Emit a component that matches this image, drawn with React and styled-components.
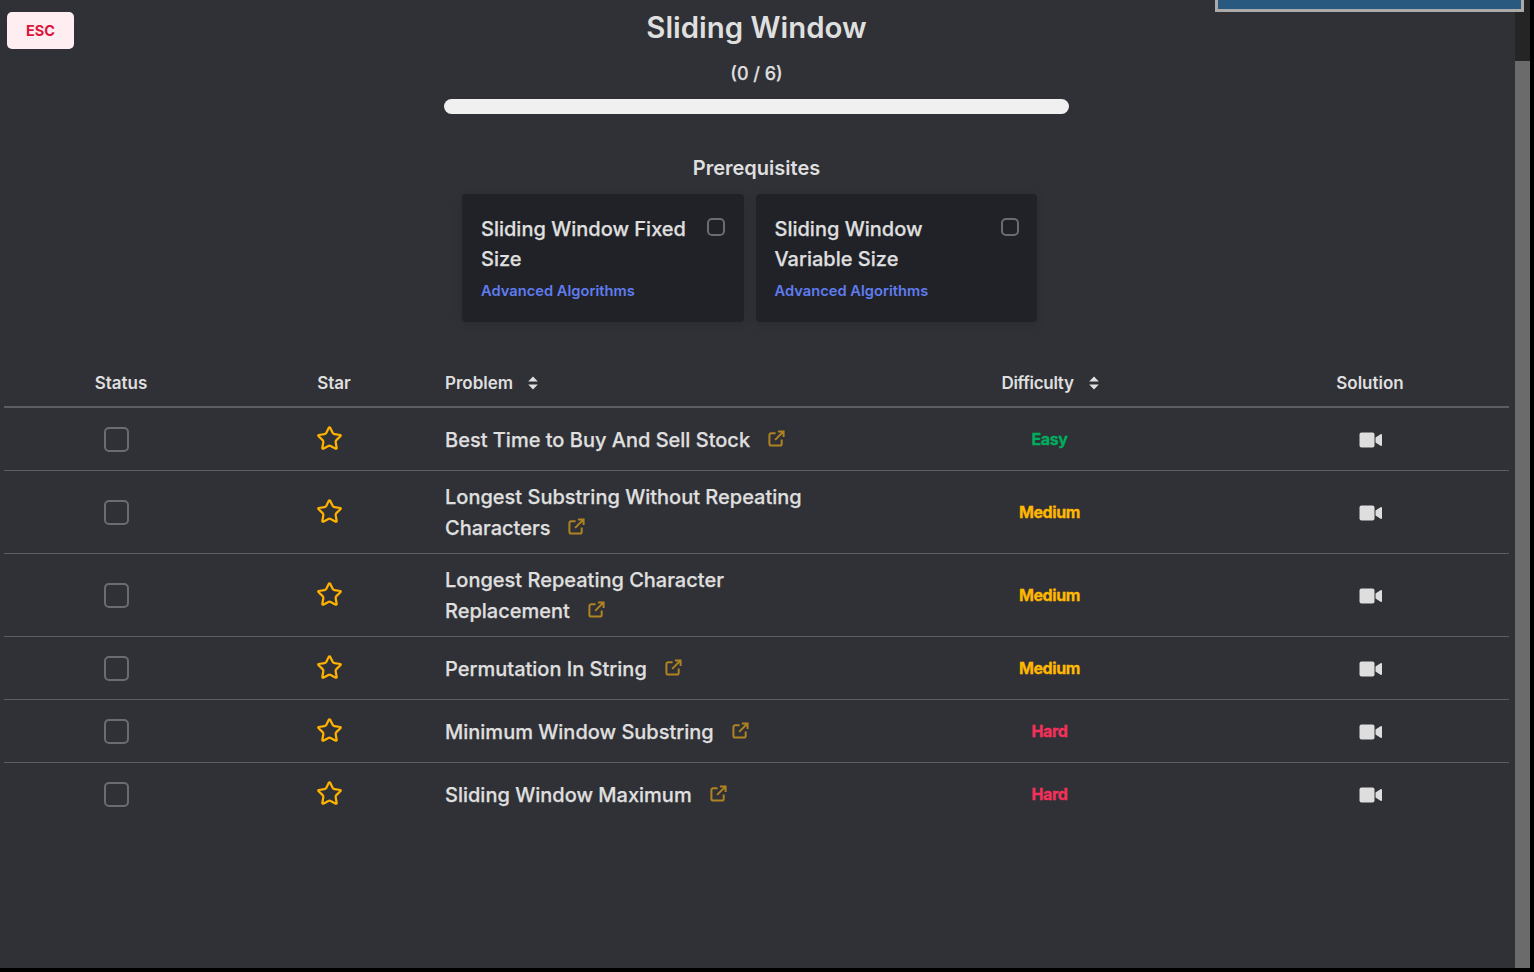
import React from 'react'
import styled, { createGlobalStyle } from 'styled-components'
import { Star } from 'lucide-react'

const problems = [
  { name: 'Best Time to Buy And Sell Stock', level: 'Easy' },
  { name: 'Longest Substring Without Repeating Characters', level: 'Medium' },
  { name: 'Longest Repeating Character Replacement', level: 'Medium' },
  { name: 'Permutation In String', level: 'Medium' },
  { name: 'Minimum Window Substring', level: 'Hard' },
  { name: 'Sliding Window Maximum', level: 'Hard' },
]

const levelColors = { Easy: '#00ad5f', Medium: '#ffb800', Hard: '#f5305c' }

const SortIcon = () => (
  <svg width="10" height="14" viewBox="0 0 10 14">
    <path d="M5 0.5 L9.8 5.6 H0.2 Z M5 13.5 L9.8 8.4 H0.2 Z" fill="#e0e0e0" />
  </svg>
)

const CamIcon = () => (
  <svg width="24" height="16" viewBox="0 0 24 16">
    <rect x="0.5" y="0.5" width="15" height="15" rx="2" fill="#dedede" />
    <path d="M16.5 5.5 L21.5 2.2 Q23 1.6 23 3 V13 Q23 14.4 21.5 13.8 L16.5 10.5 Z" fill="#dedede" />
  </svg>
)

const OpenIcon = () => (
  <svg width="17" height="17" viewBox="0 0 18 18" fill="none" stroke="#b08322" strokeWidth="2.1">
    <path d="M8 3.5 H3.5 Q1.5 3.5 1.5 5.5 V14.5 Q1.5 16.5 3.5 16.5 H12.5 Q14.5 16.5 14.5 14.5 V10" />
    <path d="M7.5 10.5 L16 2 M10.5 1.5 H16.5 V7.5" />
  </svg>
)

const App = () => (
  <>
    <GlobalStyle />
    <Frame>
      <Scroller>
        <EscButton>ESC</EscButton>
        <Title>Sliding Window</Title>
        <Count>(0 / 6)</Count>
        <Progress />
        <PrereqTitle>Prerequisites</PrereqTitle>
        <Cards>
          <Card>
            <CardTop>
              <CardName>Sliding Window Fixed Size</CardName>
              <CardCheck />
            </CardTop>
            <CardLink>Advanced Algorithms</CardLink>
          </Card>
          <Card>
            <CardTop>
              <CardName>Sliding Window Variable Size</CardName>
              <CardCheck />
            </CardTop>
            <CardLink>Advanced Algorithms</CardLink>
          </Card>
        </Cards>
        <Table>
          <HeadRow>
            <HeadCell>Status</HeadCell>
            <HeadCell>Star</HeadCell>
            <HeadCell $left>Problem <SortIcon /></HeadCell>
            <HeadCell $tight>Difficulty <SortIcon /></HeadCell>
            <HeadCell>Solution</HeadCell>
          </HeadRow>
          {problems.map((p) => (
            <Row key={p.name}>
              <Cell><RowCheck /></Cell>
              <Cell><StarWrap><Star size={27} strokeWidth={2} color="#ffb300" /></StarWrap></Cell>
              <NameCell>
                {p.name}
                <LinkIcon><OpenIcon /></LinkIcon>
              </NameCell>
              <Level $color={levelColors[p.level]}>{p.level}</Level>
              <Cell><CamWrap><CamIcon /></CamWrap></Cell>
            </Row>
          ))}
        </Table>
      </Scroller>
      <ScrollTrack><ScrollThumb /></ScrollTrack>
      <Player />
    </Frame>
  </>
)

export default App

const GlobalStyle = createGlobalStyle`
  html, body {
    margin: 0;
    height: 100%;
    background: #000;
    overflow: hidden;
  }
  body {
    font-family: Inter, "Liberation Sans", sans-serif;
  }
`

const Frame = styled.div`
  position: relative;
  width: 1530px;
  height: 968px;
  display: flex;
  background: #303136;
`

const Scroller = styled.div`
  position: relative;
  flex: 1;
  padding: 0 6px 0 4px;
  color: #dfdfdf;
  display: flex;
  flex-direction: column;
  align-items: center;
`

const ScrollTrack = styled.div`
  width: 15px;
  background: #252525;
  padding-top: 61px;
`

const ScrollThumb = styled.div`
  height: 100%;
  background: #6b6b6b;
`

const Player = styled.div`
  position: absolute;
  top: -3px;
  left: 1215px;
  width: 303px;
  height: 9px;
  border: 3px solid #aaaaaa;
  background: #2a597f;
`

const EscButton = styled.button`
  position: absolute;
  top: 12px;
  left: 7px;
  width: 67px;
  height: 37px;
  border: none;
  border-radius: 5px;
  background: #ffeef1;
  color: #dc143c;
  font: 700 14.5px Inter, "Liberation Sans", sans-serif;
`

const Title = styled.h1`
  margin: 9px 0 0;
  font-size: 29.4px;
  line-height: 37px;
  font-weight: 600;
`

const Count = styled.div`
  margin-top: 16px;
  font-size: 18px;
  line-height: 24px;
  font-weight: 500;
  -webkit-text-stroke: 0.25px #dfdfdf;
`

const Progress = styled.div`
  margin-top: 13px;
  width: 625px;
  height: 15px;
  border-radius: 8px;
  background: #f0f0f0;
`

const PrereqTitle = styled.h2`
  margin: 42px 0 0;
  font-size: 20px;
  line-height: 24px;
  font-weight: 600;
`

const Cards = styled.div`
  display: flex;
  gap: 12px;
  margin: 14px 14px 0 0;
`

const Card = styled.div`
  box-sizing: border-box;
  width: 281.5px;
  height: 128px;
  padding: 20px 18.5px 0 19px;
  border-radius: 4px;
  background: #212227;
  box-shadow: 0 2px 8px rgba(0, 0, 0, 0.12);
`

const CardTop = styled.div`
  display: flex;
  justify-content: space-between;
  align-items: flex-start;
  gap: 20px;
`

const CardName = styled.div`
  font-size: 20px;
  line-height: 30px;
  font-weight: 500;
  -webkit-text-stroke: 0.25px #dfdfdf;
`

const CardCheck = styled.div`
  flex: none;
  box-sizing: border-box;
  width: 18px;
  height: 18px;
  margin-top: 4px;
  border: 2px solid #6b6c70;
  border-radius: 5px;
`

const CardLink = styled.div`
  margin-top: 7px;
  color: #5f7cf0;
  font-size: 14.7px;
  line-height: 20px;
  font-weight: 600;
`

const Table = styled.div`
  align-self: stretch;
  margin-top: 38px;
`

const columns = '234px 192px 439px 362px 278px'

const HeadRow = styled.div`
  display: grid;
  grid-template-columns: ${columns};
  height: 46px;
  border-bottom: 2px solid #5c5d61;
`

const HeadCell = styled.div`
  display: flex;
  align-items: center;
  justify-content: ${(p) => (p.$left ? 'flex-start' : 'center')};
  gap: 15px;
  padding-left: ${(p) => (p.$left ? '15px' : '0')};
  font-size: 17px;
  font-weight: 600;
  letter-spacing: ${(p) => (p.$tight ? '-0.3px' : '0')};
`

const Row = styled.div`
  display: grid;
  grid-template-columns: ${columns};
  min-height: 62px;
  border-bottom: 1px solid #5c5d61;
  &:last-child {
    border-bottom: none;
  }
`

const Cell = styled.div`
  display: flex;
  align-items: center;
  justify-content: center;
`

const RowCheck = styled.div`
  box-sizing: border-box;
  width: 25px;
  height: 25px;
  margin-right: 9px;
  border: 2px solid #6b6c70;
  border-radius: 5px;
`

const StarWrap = styled.div`
  display: flex;
  margin: 0 9px 1px 0;
`

const CamWrap = styled.div`
  display: flex;
  margin: 1px 0 0 1px;
`

const NameCell = styled.div`
  align-self: center;
  padding: 11px 50px 9px 15px;
  font-size: 20px;
  line-height: 31px;
  font-weight: 500;
  -webkit-text-stroke: 0.25px #dfdfdf;
`

const LinkIcon = styled.span`
  display: inline-block;
  margin-left: 18px;
  line-height: 0;
`

const Level = styled(Cell)`
  color: ${(p) => p.$color};
  font-size: 16px;
  font-weight: 700;
  letter-spacing: -0.4px;
  padding-right: 1px;
  -webkit-text-stroke: 0.3px ${(p) => p.$color};
`
